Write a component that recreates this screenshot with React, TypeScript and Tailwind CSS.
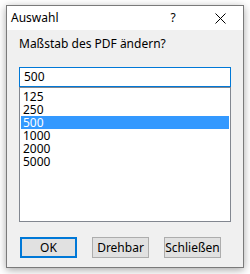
const items = ['125', '250', '500', '1000', '2000', '5000'];

export default function App() {
  return (
    <div
      className="w-[250px] h-[274px] bg-white pl-[6px] pt-[5px] text-[12px] text-black"
      style={{ fontFamily: '"Segoe UI", "Noto Sans", "Open Sans", sans-serif' }}
    >
      <div className="w-[238px] h-[263px] border border-[#7a7a7a] bg-[#f0f0f0] shadow-[0_2px_8px_rgba(0,0,0,0.35)] flex flex-col">
        <div className="h-[24px] bg-white flex items-center pl-[4px] shrink-0">
          <span className="flex-1">Auswahl</span>
          <span className="w-[10px] text-center mr-[37px]">?</span>
          <svg width="11" height="11" viewBox="0 0 11 11" className="mr-[17px]">
            <path d="M0.5 0.5 L10.5 10.5 M10.5 0.5 L0.5 10.5" stroke="#000" strokeWidth="1" />
          </svg>
        </div>
        <div className="flex-1 px-[12px] pt-[6px]">
          <div className="leading-[16px]">Maßstab des PDF ändern?</div>
          <div className="mt-[15px] h-[20px] border border-[#0078d7] bg-white pl-[4px] flex items-center leading-[16px]">
            500
          </div>
          <div className="h-[135px] border border-[#828790] bg-white pt-[2px] px-[1px]">
            {items.map((v) => (
              <div
                key={v}
                className={`h-[13px] leading-[13px] pl-[2px] ${v === '500' ? 'bg-[#3399ff] text-white' : ''}`}
              >
                {v}
              </div>
            ))}
          </div>
          <div className="flex gap-[15px] mt-[15px] pl-[1px]">
            <button className="w-[57px] h-[21px] border-2 border-[#0078d7] bg-[#e1e1e1] leading-[16px]">OK</button>
            <button className="w-[57px] h-[21px] border border-[#adadad] bg-[#e1e1e1] leading-[16px]">Drehbar</button>
            <button className="w-[57px] h-[21px] border border-[#adadad] bg-[#e1e1e1] leading-[16px]">Schließen</button>
          </div>
        </div>
      </div>
    </div>
  );
}
